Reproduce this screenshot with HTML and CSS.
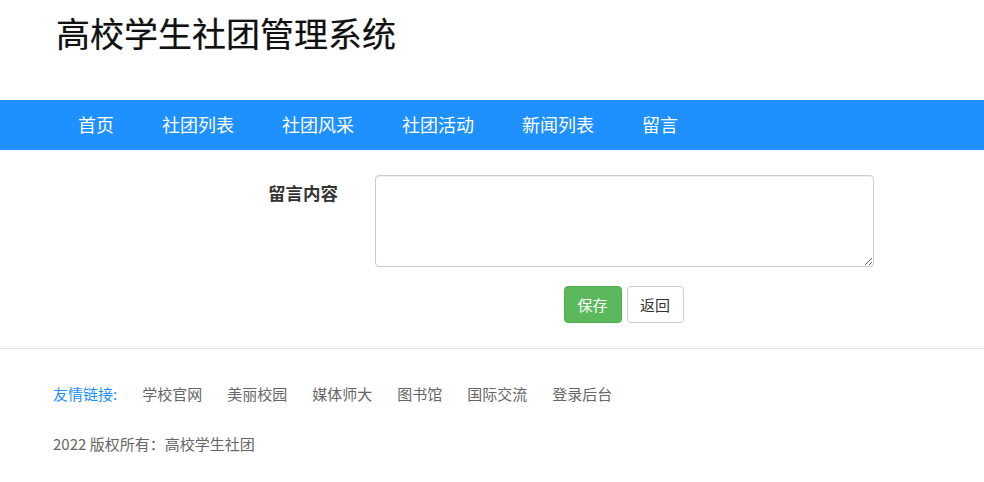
FILE: index.html
```html
<!DOCTYPE html>
<html lang="zh-CN">
<head>
  <meta charset="utf-8">
  <title>高校学生社团管理系统 - 留言</title>
  <link rel="stylesheet" href="styles.css">
</head>
<body>
  <div class="header">
    <h1 class="logo">高校学生社团管理系统</h1>
  </div>
  <div class="nav">
    <ul>
      <li><a href="#">首页</a></li>
      <li><a href="#">社团列表</a></li>
      <li><a href="#">社团风采</a></li>
      <li><a href="#">社团活动</a></li>
      <li><a href="#">新闻列表</a></li>
      <li><a href="#">留言</a></li>
    </ul>
  </div>
  <div class="main">
    <form class="msgform">
      <div class="formrow">
        <label for="content">留言内容</label>
        <textarea id="content"></textarea>
      </div>
      <div class="btnrow">
        <button type="submit" class="btn btn-save">保存</button>
        <button type="button" class="btn btn-back">返回</button>
      </div>
    </form>
  </div>
  <div class="footer">
    <div class="links">
      <span class="links-title">友情链接:</span>
      <a href="#">学校官网</a>
      <a href="#">美丽校园</a>
      <a href="#">媒体师大</a>
      <a href="#">图书馆</a>
      <a href="#">国际交流</a>
      <a href="#">登录后台</a>
    </div>
    <p class="copy">2022 版权所有：高校学生社团</p>
  </div>
</body>
</html>
```
FILE: styles.css
```css
body{
  margin: 0;
  background: #FFF;
  font-family: "Noto Sans CJK SC", "Noto Sans", Arial, sans-serif;
  color: #333;
}
a{
  text-decoration: none;
}

.header{
  height: 100px;
  padding-left: 56px;
  display: flex;
  align-items: center;
}
.logo{
  margin: 0 0 34px 0;
  font-size: 34px;
  font-weight: normal;
  line-height: 1;
  color: #111;
  text-shadow: 0 0 1px rgba(0,0,0,.4);
}

.nav{
  background: #1E90FF;
  height: 50px;
}
.nav ul{
  list-style: none;
  margin: 0;
  padding: 0 0 0 54px;
  display: flex;
}
.nav li a{
  display: block;
  padding: 0 24px;
  line-height: 49px;
  font-size: 18px;
  color: #FFF;
}

.main{
  padding: 25px 0 25px 0;
  border-bottom: 1px solid #E5E5E5;
}
.formrow{
  display: flex;
  gap: 37px;
  padding-left: 53px;
}
.formrow label{
  width: 285px;
  text-align: right;
  font-size: 17.5px;
  font-weight: bold;
  line-height: 36px;
  color: #333;
}
.formrow textarea{
  width: 499px;
  height: 92px;
  box-sizing: border-box;
  border: 1px solid #CCC;
  border-radius: 4px;
  box-shadow: inset 0 1px 1px rgba(0,0,0,.075);
  margin: 0;
}
.btnrow{
  margin: 19px 0 0 374px;
  width: 499px;
  display: flex;
  justify-content: center;
  gap: 5px;
}
.btn{
  height: 37px;
  padding: 0;
  white-space: nowrap;
  border-radius: 4px;
  font-family: "Noto Sans CJK SC", Arial, sans-serif;
  font-size: 15px;
  cursor: pointer;
}
.btn-save{
  background: #5CB85C;
  border: 1px solid #4CAE4C;
  color: #FFF;
  width: 58px;
}
.btn-back{
  background: #FFF;
  border: 1px solid #CCC;
  color: #333;
  width: 57px;
}

.footer{
  padding: 34px 0 0 53px;
  font-size: 15px;
}
.links{
  display: flex;
  gap: 25px;
  line-height: 22px;
}
.links-title{
  color: #1E90FF;
}
.links a{
  color: #666;
}
.copy{
  margin: 28px 0 0 0;
  color: #666;
  line-height: 22px;
}
```
